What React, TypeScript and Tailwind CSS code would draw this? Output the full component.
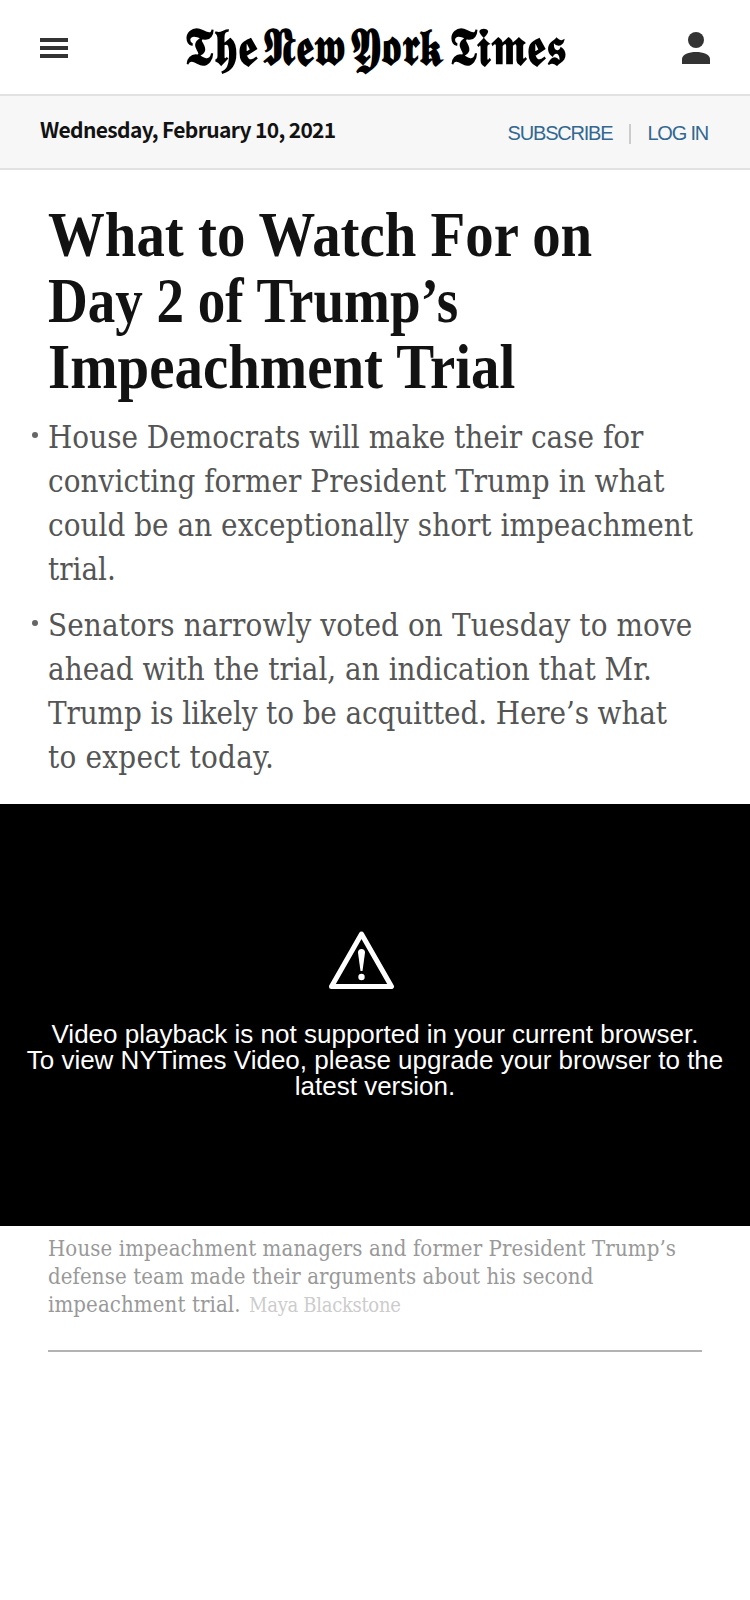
const headline = [
  { text: 'What to Watch For on', fit: 'scale-x-[0.888]' },
  { text: 'Day 2 of Trump’s', fit: 'scale-x-[0.86]' },
  { text: 'Impeachment Trial', fit: 'scale-x-[0.889]' },
];

const summary = [
  [
    { text: 'House Democrats will make their case for', tracking: 'tracking-[0.02px]' },
    { text: 'convicting former President Trump in what', tracking: 'tracking-[0.07px]' },
    { text: 'could be an exceptionally short impeachment', tracking: 'tracking-[0.04px]' },
    { text: 'trial.', tracking: 'tracking-normal' },
  ],
  [
    { text: 'Senators narrowly voted on Tuesday to move', tracking: 'tracking-[0.12px]' },
    { text: 'ahead with the trial, an indication that Mr.', tracking: 'tracking-[0.03px]' },
    { text: 'Trump is likely to be acquitted. Here’s what', tracking: 'tracking-[-0.11px]' },
    { text: 'to expect today.', tracking: 'tracking-[0.25px]' },
  ],
];

const wordmark = [
  { text: '𝕿𝖍𝖊', x: -2, width: 73 },
  { text: '𝕹𝖊𝖜', x: 76, width: 83 },
  { text: '𝖄𝖔𝖗𝖐', x: 164, width: 94 },
  { text: '𝕿𝖎𝖒𝖊𝖘', x: 263, width: 117 },
];

function Logo() {
  return (
    <svg
      role="img"
      aria-label="The New York Times"
      width="379"
      height="56"
      viewBox="0 0 379 56"
      className="overflow-visible font-['DejaVu_Sans',sans-serif] text-[52px] font-bold"
    >
      {wordmark.map((word) => (
        <text key={word.x} x={word.x} y="41" textLength={word.width} lengthAdjust="spacingAndGlyphs">
          {word.text}
        </text>
      ))}
    </svg>
  );
}

function Masthead() {
  return (
    <header className="flex h-24 items-start justify-between border-b-2 border-[#e2e2e2] px-10">
      <svg width="28" height="20" viewBox="0 0 28 20" fill="#333" className="mt-[38px] mr-[118px]">
        <path d="M0 0h28v4H0zM0 8h28v4H0zM0 16h28v4H0z" />
      </svg>
      <div className="mt-6 flex-1">
        <Logo />
      </div>
      <svg width="28" height="32" viewBox="0 0 28 32" fill="#333" className="mt-8">
        <circle cx="14" cy="8" r="8" />
        <path d="M0 32v-5c0-4.500 7-7 14-7s14 2.500 14 7v5z" />
      </svg>
    </header>
  );
}

function DateBar() {
  return (
    <div className="flex h-[74px] items-start justify-between border-b-2 border-[#e2e2e2] bg-[#f7f7f7] pr-[42px] pl-10">
      <span className="mt-[18px] font-['Noto_Sans_CJK_SC',sans-serif] text-[21px] leading-[30px] font-bold tracking-[-0.66px] text-[#121212]">
        Wednesday, February 10, 2021
      </span>
      <div className="mt-[26px] flex items-start font-['Liberation_Sans',sans-serif] text-[20px] leading-[22px] text-[#326891]">
        <span className="tracking-[-1.2px]">SUBSCRIBE</span>
        <span className="mt-0.5 mr-4 ml-[17px] h-5 w-0.5 bg-[#ccc]" />
        <span className="tracking-[-1.2px]">LOG IN</span>
      </div>
    </div>
  );
}

function VideoError() {
  return (
    <section className="flex h-[422px] flex-col bg-black pt-[127px] text-white">
      <svg width="66" height="58" viewBox="0 0 66 58" className="ml-[329px]">
        <path d="M32.500 3 62.500 55.500H2.500z" fill="none" stroke="#fff" strokeWidth="5" strokeLinejoin="round" />
        <path d="M32.500 18c2.200 0 3.700 1.500 3.500 3.800L33.500 40h-2L29 21.800c-.2-2.300 1.300-3.800 3.500-3.800z" fill="#fff" />
        <circle cx="32.500" cy="46" r="3.200" fill="#fff" />
      </svg>
      <p className="mt-8 text-center font-['Liberation_Sans',sans-serif] text-[26px] leading-[26px] whitespace-nowrap">
        Video playback is not supported in your current browser.
        <br />
        To view NYTimes Video, please upgrade your browser to the
        <br />
        latest version.
      </p>
    </section>
  );
}

export default function App() {
  return (
    <main className="min-h-[1600px] w-[750px] bg-white">
      <Masthead />
      <DateBar />
      <h1 className="mt-8 ml-12 font-['Liberation_Serif',serif] text-[64px] leading-[66px] font-bold whitespace-nowrap text-[#121212]">
        {headline.map((line) => (
          <span key={line.text} className={`block origin-left ${line.fit}`}>
            {line.text}
          </span>
        ))}
      </h1>
      <ul className="mt-[15px] mb-[25px] flex flex-col gap-3 font-['DejaVu_Serif_Condensed','DejaVu_Serif',serif] text-[31px] leading-[44px] font-stretch-condensed whitespace-nowrap text-[#555]">
        {summary.map((lines) => (
          <li key={lines[0].text} className="flex pl-8">
            <span className="mt-[17px] mr-[10px] size-1.5 rounded-full bg-[#666]" />
            <div>
              {lines.map((line) => (
                <div key={line.text} className={line.tracking}>
                  {line.text}
                </div>
              ))}
            </div>
          </li>
        ))}
      </ul>
      <VideoError />
      <div className="mx-12 border-b-2 border-[#b3b3b3] pt-[9px] pb-[31px] font-['DejaVu_Serif_Condensed','DejaVu_Serif',serif] text-[22px] leading-7 font-stretch-condensed tracking-[0.11px] whitespace-nowrap text-[#999]">
        House impeachment managers and former President Trump’s
        <br />
        defense team made their arguments about his second
        <br />
        impeachment trial. <span className="ml-0.5 text-[20px] leading-none tracking-[-0.3px] text-[#ccc]">Maya Blackstone</span>
      </div>
    </main>
  );
}
